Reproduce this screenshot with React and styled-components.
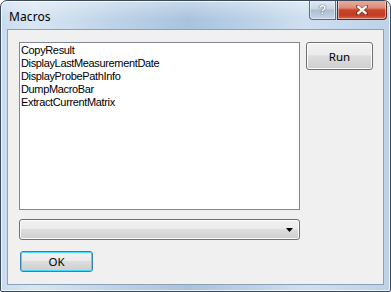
import React from 'react';
import styled, { createGlobalStyle } from 'styled-components';

const GlobalStyle = createGlobalStyle`
  html, body {
    margin: 0;
    padding: 0;
    background: #ffffff;
  }
  body {
    font-family: "Liberation Sans", Arial, sans-serif;
  }
`;

const macros = [
  'CopyResult',
  'DisplayLastMeasurementDate',
  'DisplayProbePathInfo',
  'DumpMacroBar',
  'ExtractCurrentMatrix',
];

const Window = styled.div`
  box-sizing: border-box;
  width: 391px;
  height: 292px;
  display: flex;
  flex-direction: column;
  border: 1px solid #3b4a5c;
  border-radius: 7px 7px 2px 2px;
  box-shadow: inset 0 0 0 1px rgba(255, 255, 255, 0.75);
  background:
    linear-gradient(180deg, rgba(255,255,255,0.35) 0px, rgba(255,255,255,0) 18px),
    linear-gradient(90deg, #c9dbee 0%, #d9e6f3 8%, #bcd2e8 30%, #a9c3de 48%, #b8cfe6 62%, #cfdff0 78%, #bdd2e8 100%);
  overflow: hidden;
`;

const TitleBar = styled.div`
  height: 28px;
  display: flex;
  align-items: flex-start;
  justify-content: space-between;
  padding-left: 8px;
  padding-right: 3px;
`;

const Title = styled.span`
  font-family: "Noto Sans", "Open Sans", sans-serif;
  font-size: 12px;
  color: #000000;
  margin-top: 7px;
  letter-spacing: 0.1px;
`;

const CaptionButtons = styled.div`
  display: flex;
  margin-top: -1px;
`;

const CaptionButton = styled.div`
  box-sizing: border-box;
  height: 20px;
  width: ${p => p.$w}px;
  display: flex;
  align-items: center;
  justify-content: center;
  border: 1px solid ${p => (p.$close ? '#5c2a22' : '#5d6d80')};
  border-top: none;
  border-radius: ${p => (p.$close ? '0 0 4px 0' : '0 0 0 4px')};
  margin-left: ${p => (p.$close ? '1px' : '0')};
  box-shadow: inset 0 0 0 1px rgba(255, 255, 255, 0.45);
  background: ${p =>
    p.$close
      ? 'linear-gradient(180deg, #eab0a2 0%, #de8a76 42%, #c8442a 52%, #c23c22 80%, #d66a4c 100%)'
      : 'linear-gradient(180deg, #e4ecf5 0%, #c9d6e4 45%, #aebfd3 55%, #c5d5e6 100%)'};
  color: #ffffff;
`;

const Client = styled.div`
  flex: 1;
  margin: 0 6px 6px 6px;
  border: 1px solid #8aa0bb;
  background: #f0f0f0;
  display: grid;
  grid-template-columns: 281px 67px;
  column-gap: 6px;
  align-content: start;
  padding: 12px 0 0 11px;
`;

const LeftColumn = styled.div`
  display: flex;
  flex-direction: column;
`;

const ListBox = styled.div`
  box-sizing: border-box;
  height: 168px;
  border: 1px solid #828790;
  background: #ffffff;
  padding: 1px 0 0 1px;
  display: flex;
  flex-direction: column;
`;

const ListItem = styled.div`
  font-family: "Liberation Sans", Arial, sans-serif;
  font-size: 11px;
  line-height: 13px;
  height: 13px;
  color: #000000;
  letter-spacing: -0.35px;
  word-spacing: -1px;
  white-space: nowrap;
`;

const ComboBox = styled.div`
  box-sizing: border-box;
  height: 21px;
  margin-top: 9px;
  border: 1px solid #707070;
  border-radius: 3px;
  box-shadow: inset 0 0 0 1px #fcfcfc;
  background: linear-gradient(180deg, #f2f2f2 0%, #ebebeb 45%, #dddddd 50%, #cfcfcf 100%);
  display: flex;
  align-items: center;
  justify-content: flex-end;
  padding-right: 6px;
`;

const Button = styled.div`
  box-sizing: border-box;
  width: ${p => p.$w}px;
  height: ${p => p.$h}px;
  border: 1px solid ${p => (p.$default ? '#3c7fb1' : '#707070')};
  border-radius: 3px;
  box-shadow: inset 0 0 0 1px ${p => (p.$default ? '#48d8fb' : '#fcfcfc')};
  background: linear-gradient(180deg, #f2f2f2 0%, #ebebeb 45%, #dddddd 50%, #cfcfcf 100%);
  display: flex;
  align-items: center;
  justify-content: center;
  font-family: "Noto Sans", "Open Sans", sans-serif;
  font-size: 11.5px;
  color: #000000;
  margin-top: ${p => p.$top || 0}px;
  margin-left: ${p => p.$left || 0}px;
`;

const Arrow = () => (
  <svg width="7" height="4" viewBox="0 0 7 4">
    <path d="M0 0H7L3.5 4Z" fill="#000" />
  </svg>
);

const CloseGlyph = () => (
  <svg width="12" height="10" viewBox="0 0 12 10">
    <path
      d="M1 1L11 9M11 1L1 9"
      stroke="#4a1e18"
      strokeWidth="3.4"
      strokeLinecap="square"
      opacity="0.55"
    />
    <path d="M1.5 1.2L10.5 8.8M10.5 1.2L1.5 8.8" stroke="#ffffff" strokeWidth="2.2" />
  </svg>
);

const HelpGlyph = styled.span`
  font-family: "Liberation Sans", Arial, sans-serif;
  font-weight: bold;
  font-size: 13px;
  line-height: 13px;
  color: #ffffff;
  text-shadow: 0 0 1px #3b4a5c, 0 0 1px #3b4a5c;
`;

export default function App() {
  return (
    <>
      <GlobalStyle />
      <Window>
        <TitleBar>
          <Title>Macros</Title>
          <CaptionButtons>
            <CaptionButton $w={27}>
              <HelpGlyph>?</HelpGlyph>
            </CaptionButton>
            <CaptionButton $w={50} $close>
              <CloseGlyph />
            </CaptionButton>
          </CaptionButtons>
        </TitleBar>
        <Client>
          <LeftColumn>
            <ListBox>
              {macros.map(name => (
                <ListItem key={name}>{name}</ListItem>
              ))}
            </ListBox>
            <ComboBox>
              <Arrow />
            </ComboBox>
            <Button $default $w={73} $h={21} $top={11} $left={1}>
              OK
            </Button>
          </LeftColumn>
          <Button $w={67} $h={28}>
            Run
          </Button>
        </Client>
      </Window>
    </>
  );
}
